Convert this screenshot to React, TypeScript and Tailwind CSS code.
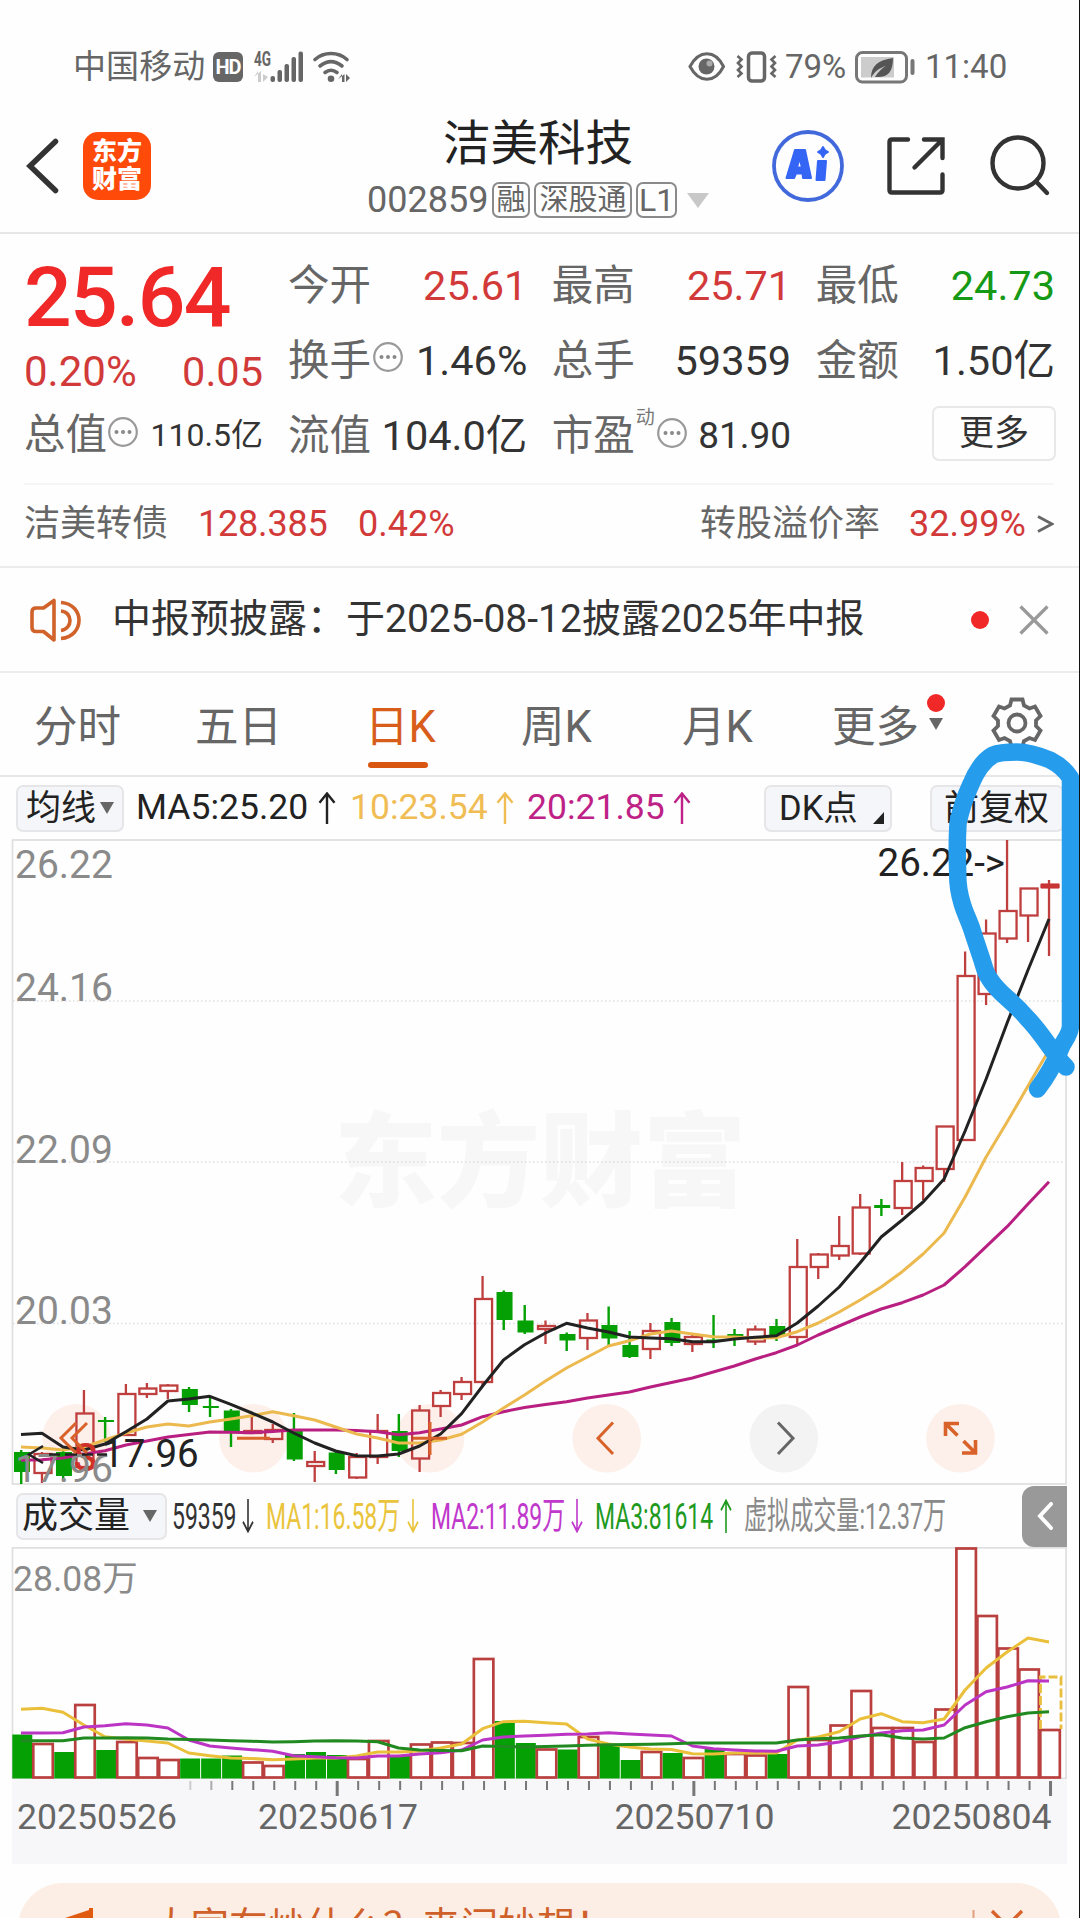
import { FC, ReactNode } from 'react';
import clsx from 'clsx';

// [kind, body top, body bottom, wick top, wick bottom]
type Candle = ['r' | 'g', number, number, number, number];
type Bar = ['r' | 'g', number];

const STEP = 20.98;
const cx = (i: number) => 21 + STEP * i;

const candles: Candle[] = [
  ['g', 1452, 1472, 1450, 1484],
  ['r', 1454, 1473, 1452, 1483],
  ['g', 1452, 1476, 1449, 1479],
  ['r', 1413.5, 1467, 1390, 1470],
  ['g', 1420, 1422, 1417, 1442],
  ['r', 1394, 1435, 1384, 1435],
  ['r', 1388.5, 1394, 1383, 1398],
  ['r', 1385.5, 1391, 1384, 1399],
  ['g', 1389, 1405, 1387, 1412],
  ['g', 1406, 1408, 1397, 1417],
  ['g', 1410.5, 1432, 1409, 1447],
  ['r', 1431, 1433, 1416, 1433],
  ['r', 1430, 1439, 1424, 1443],
  ['g', 1431, 1459.5, 1413, 1461],
  ['r', 1462, 1466, 1451, 1482],
  ['g', 1452.5, 1470, 1452, 1474],
  ['r', 1457, 1477.5, 1453, 1479],
  ['r', 1431, 1457, 1414, 1464],
  ['g', 1431, 1451, 1414, 1457],
  ['r', 1410.5, 1458.5, 1405, 1472],
  ['r', 1393, 1406, 1390, 1417],
  ['r', 1382, 1394, 1377, 1400],
  ['r', 1299, 1382, 1276, 1387],
  ['g', 1292, 1320, 1290.5, 1330],
  ['g', 1320.5, 1332.5, 1305, 1334],
  ['r', 1326, 1329, 1320.5, 1344],
  ['g', 1334, 1340.5, 1332.5, 1351],
  ['r', 1320.5, 1338, 1313, 1350],
  ['g', 1325, 1338.5, 1306.5, 1346],
  ['g', 1345, 1357, 1331, 1358],
  ['r', 1331, 1349, 1323, 1359],
  ['g', 1322, 1343, 1318, 1346],
  ['r', 1337, 1344, 1335, 1352],
  ['g', 1339.5, 1341.5, 1315, 1348],
  ['g', 1334, 1336.5, 1329, 1346],
  ['r', 1329.5, 1341.5, 1325.5, 1345],
  ['g', 1326, 1337, 1319, 1341],
  ['r', 1267, 1337, 1239, 1345],
  ['r', 1254.5, 1267, 1253, 1279],
  ['r', 1246, 1255.5, 1216, 1260],
  ['r', 1207.5, 1253.5, 1194, 1255],
  ['g', 1205, 1208, 1199, 1216],
  ['r', 1181, 1208, 1162, 1215],
  ['r', 1168, 1181, 1165.5, 1200],
  ['r', 1126.5, 1169, 1126, 1182],
  ['r', 976, 1140, 951.5, 1140],
  ['r', 933.5, 994, 919.5, 1005],
  ['r', 911, 938.5, 840, 943],
  ['r', 888.5, 915.5, 888, 942],
  ['r', 885, 887, 880, 956],
];

const ma5 = [
  1434.5, 1433.3, 1447, 1450, 1444, 1431.7, 1419, 1401, 1399, 1396.3, 1404.3, 1413, 1422, 1433, 1443,
  1451, 1455.7, 1456, 1454, 1446, 1434, 1413.7, 1386, 1360, 1344.7, 1333, 1323.3, 1328, 1332, 1337,
  1338, 1338.7, 1341.7, 1341.7, 1339, 1337.3, 1335.7, 1323, 1306, 1287, 1262.7, 1237, 1220, 1202,
  1179, 1131, 1079, 1023, 970, 919,
];
const ma10 = [
  1447, 1448, 1450, 1447, 1440, 1433, 1427, 1424, 1426, 1422, 1419, 1415.7, 1411.7, 1415.7, 1420,
  1427, 1434, 1438, 1443, 1443, 1440, 1434.3, 1422, 1408, 1395, 1381, 1368, 1357, 1346, 1340.7,
  1334, 1331, 1334, 1336.7, 1337, 1338, 1337.7, 1331.7, 1323, 1312, 1300, 1287, 1271.7, 1254, 1233,
  1197, 1157, 1122, 1086, 1050,
];
const ma20 = [
  1460.3, 1459.7, 1458, 1454, 1450.7, 1445, 1441, 1437, 1434.5, 1432, 1432.3, 1432.7, 1431.5, 1430,
  1430, 1430, 1430.5, 1431.7, 1434.7, 1432.7, 1429, 1425, 1416.7, 1411.7, 1407.5, 1404.5, 1401.7,
  1398, 1395, 1392, 1387, 1382.5, 1378, 1372, 1366, 1359, 1352.7, 1345, 1335, 1326, 1317, 1309,
  1302.7, 1295, 1285, 1266.7, 1246.7, 1226.7, 1204, 1181.7,
];

const bars: Bar[] = [
  ['g', 1734.5], ['r', 1744], ['g', 1752], ['r', 1705], ['g', 1750],
  ['r', 1742], ['r', 1758], ['r', 1760], ['g', 1758.5], ['g', 1758.5],
  ['g', 1755.5], ['r', 1762.5], ['r', 1766], ['g', 1754], ['g', 1752],
  ['g', 1755], ['r', 1759], ['r', 1741], ['g', 1755], ['r', 1744.5],
  ['r', 1742.5], ['r', 1743], ['r', 1659], ['g', 1721], ['g', 1743],
  ['r', 1749.5], ['g', 1749.5], ['r', 1737], ['g', 1745], ['g', 1760],
  ['r', 1752], ['g', 1753], ['r', 1758], ['g', 1749], ['r', 1754],
  ['r', 1755.5], ['g', 1754], ['r', 1687], ['r', 1740], ['r', 1725.5],
  ['r', 1691], ['r', 1728], ['r', 1728], ['r', 1742], ['r', 1709.5],
  ['r', 1548.5], ['r', 1616], ['r', 1648.5], ['r', 1669.5], ['r', 1730],
];

const vol5 = [
  1709.3, 1708.3, 1712.3, 1725, 1736.7, 1739, 1741, 1743, 1753, 1755.7, 1758, 1758.5, 1759.7, 1759,
  1758, 1758, 1756, 1752, 1752, 1751, 1748, 1744, 1728.7, 1721.7, 1721.3, 1722.7, 1724, 1739, 1744,
  1747, 1749, 1749.5, 1753.7, 1754, 1753, 1753, 1753, 1740, 1737, 1731.7, 1719, 1713.7, 1721.7,
  1722.7, 1719, 1690, 1668, 1652, 1638, 1642,
];
const vol10 = [
  1733, 1733, 1732.7, 1727, 1725.7, 1723.7, 1725, 1728, 1740, 1746, 1748, 1749.7, 1751.3, 1755.7,
  1756.7, 1757.7, 1758, 1756, 1756, 1754, 1752.7, 1750, 1740, 1737, 1736, 1735.3, 1734.3, 1734,
  1732.7, 1734, 1735, 1736, 1746, 1748.7, 1750, 1751, 1751.3, 1746, 1745, 1742, 1736.7, 1733,
  1730.7, 1730, 1725, 1705, 1691.7, 1687, 1680.7, 1681,
];
const vol20 = [
  1740.7, 1740.7, 1740.7, 1738, 1738, 1737.7, 1738, 1739, 1739.5, 1740, 1740.7, 1741.3, 1742, 1741.7,
  1741, 1740.7, 1741, 1741.7, 1748, 1750, 1750.5, 1750.7, 1746, 1746.5, 1747, 1746.5, 1746, 1745.3,
  1744.7, 1744.5, 1744.3, 1743.7, 1743, 1743, 1743, 1743, 1743, 1740, 1738.7, 1738, 1736, 1734.7,
  1738, 1739, 1738, 1727.7, 1721.7, 1716.7, 1713, 1711.7,
];

const toPoints = (values: number[]) => values.map((y, i) => `${cx(i).toFixed(1)},${y}`).join(' ');

const MoreDots: FC<{ className?: string }> = ({ className }) => (
  <svg viewBox="0 0 30 30" className={clsx('w-[30px] h-[30px] shrink-0', className)}>
    <circle cx="15" cy="15" r="13.8" fill="none" stroke="#999" strokeWidth="2.2" />
    <circle cx="8.5" cy="15" r="2" fill="#888" />
    <circle cx="15" cy="15" r="2" fill="#888" />
    <circle cx="21.5" cy="15" r="2" fill="#888" />
  </svg>
);

const Arrow: FC<{ down?: boolean; className?: string }> = ({ down, className }) => (
  <svg viewBox="0 0 18 33" preserveAspectRatio="none" className={clsx('shrink-0', className)}>
    <path
      d={down ? 'M9 0V31M1.5 22L9 31.5L16.5 22' : 'M9 33V2M1.5 11L9 1.5L16.5 11'}
      fill="none"
      stroke="currentColor"
      strokeWidth="2.4"
    />
  </svg>
);

const StatusBar = () => (
  <div className="flex items-center h-[100px] pt-[33px] pl-[73px] text-[33px] leading-[33px] text-[#666]">
    <span className="w-[140px] tracking-[0.1px]">中国移动</span>
    <span className="flex items-center justify-center w-[30px] h-[30px] rounded-[6px] bg-[#666] text-white text-[20px] leading-none font-bold tracking-[-1px]">
      HD
    </span>
    <svg viewBox="252 47 100 36" className="w-[100px] h-[36px] ml-[9px]">
      <text x="254" y="63.500" fontSize="19.500" fontWeight="700" textLength="17" lengthAdjust="spacingAndGlyphs" fill="#666">
        4G
      </text>
      <g fill="#ccc">
        <path d="M258 69V80H261V69L254 75ZM263 69V80L268 75L263 72Z" />
      </g>
      <g fill="#666">
        <rect x="270.5" y="74" width="4.5" height="6" rx="2" />
        <rect x="277.5" y="68" width="4.5" height="12" rx="2" />
        <rect x="284.5" y="62" width="4.5" height="18" rx="2" />
        <rect x="291.5" y="55" width="4.5" height="25" rx="2" />
        <rect x="298.5" y="49.5" width="4.5" height="30.5" rx="2" />
        <circle cx="331" cy="76.8" r="3.3" />
        <path d="M342 72V80H344.500V72L338 77.500ZM346 72V80L350 76Z" />
      </g>
      <g fill="none" stroke="#666" strokeWidth="3.6" strokeLinecap="round">
        <path d="M315 57.500C324 49.500 338 49.500 347 57.500" />
        <path d="M320 64C327 58.500 335 58.500 342 64" />
        <path d="M325 70.500C329 67.500 333 67.500 337 70.500" />
      </g>
    </svg>
    <div className="flex-1" />
    <svg viewBox="688 49 90 32" className="w-[90px] h-[32px] mr-[7px]">
      <g fill="none" stroke="#666" strokeWidth="3">
        <path d="M690 64.500C699 47.500 715 47.500 723.500 64.500C715 81.500 699 81.500 690 64.500Z" />
        <rect x="748.500" y="51" width="16" height="28" rx="3.500" strokeWidth="3.500" />
        <path d="M737.500 54L741.500 57.500L738 61L741.500 64.500L738 68L741.500 71.500L737.500 75" strokeWidth="2.600" />
        <path d="M775.500 54L771.500 57.500L775 61L771.500 64.500L775 68L771.500 71.500L775.500 75" strokeWidth="2.600" />
      </g>
      <circle cx="706.500" cy="64.500" r="8" fill="#666" />
      <circle cx="709.500" cy="61.500" r="3" fill="#aaa" />
    </svg>
    <span className="w-[69px]">79%</span>
    <svg viewBox="853 48 62 34" className="w-[62px] h-[34px]">
      <rect x="855.500" y="50.500" width="50" height="29.500" rx="6" fill="none" stroke="#777" strokeWidth="3" />
      <rect x="860" y="55" width="33" height="20.500" fill="#ccc" />
      <path d="M870 76C870 64 877 58 892 56C892 70 887 76 874 75C877 70 881 66 885 64C878 66 873 70 870 76Z" fill="#555" />
      <rect x="909.500" y="57" width="4" height="16" rx="2" fill="#777" />
    </svg>
    <span className="w-[83px] ml-[9px] mr-[71px]">11:40</span>
  </div>
);

const Tag: FC<{ children: ReactNode; className?: string }> = ({ children, className }) => (
  <span
    className={clsx(
      'flex items-center justify-center h-[36px] border-2 border-[#8a8a8a] rounded-[7px] text-[29px] leading-none',
      className,
    )}
  >
    {children}
  </span>
);

const Header = () => (
  <header className="flex h-[134px] border-b-2 border-[#e6e6e6]">
    <svg viewBox="26 137 34 58" className="w-[34px] h-[58px] ml-[26px] mt-[37px]">
      <path d="M55.500 141.500L30 166L55.500 190.500" fill="none" stroke="#333" strokeWidth="5.500" strokeLinecap="round" />
    </svg>
    <div className="flex flex-col items-center justify-center w-[68px] h-[68px] ml-[23px] mt-[32px] rounded-[15px] bg-[#ff4a0a] text-white text-[25px] leading-[28px] font-black">
      <span>东方</span>
      <span>财富</span>
    </div>
    <div className="flex flex-col items-center w-[344px] ml-[215px] pt-[16px]">
      <h1 className="text-[47.500px] leading-[56px] text-[#222]">洁美科技</h1>
      <div className="flex items-center h-[40px] mt-[8px] gap-[4px] text-[#666]">
        <span className="w-[121px] text-[36px] leading-none">002859</span>
        <Tag className="w-[38px]">融</Tag>
        <Tag className="w-[98px]">深股通</Tag>
        <Tag className="w-[41px] text-[32px]">L1</Tag>
        <svg viewBox="0 0 22 15" className="w-[22px] h-[15px] ml-[6px]">
          <path d="M0 0H22L11 15Z" fill="#c8c8c8" />
        </svg>
      </div>
    </div>
    <svg viewBox="770 128 282 76" className="w-[282px] h-[76px] ml-[60px] mt-[28px]">
      <circle cx="808" cy="166" r="34" fill="none" stroke="#4169dc" strokeWidth="3.800" />
      <g fill="#3565f5" stroke="#3565f5" strokeWidth="2" strokeLinejoin="round">
        <path fillRule="evenodd" d="M795 150H805L811 178H803L802.500 173.500H796L794 178H786.500ZM799.500 158L797 167.500H802Z" />
        <path d="M818 161H826L824.500 180H816.500Z" />
        <path d="M823 147L824.800 150.200L828 152L824.800 153.800L823 157L821.200 153.800L818 152L821.200 150.200Z" />
      </g>
      <g fill="none" stroke="#333" strokeWidth="4.400" strokeLinecap="round">
        <path d="M908 139.500H892Q889.500 139.500 889.500 142V190Q889.500 192.500 892 192.500H940Q942.500 192.500 942.500 190V174.500" />
        <path d="M924 139.500H942.500V158M942 140L914.500 167.500" />
        <circle cx="1018" cy="163" r="25.500" />
        <path d="M1036.500 182L1047 193" />
      </g>
    </svg>
  </header>
);

const UP = 'text-[#d23a3a]';

interface IField {
  label: string;
  value: string;
  valueClassName?: string;
  info?: boolean;
}

const fields: IField[] = [
  { label: '今开', value: '25.61', valueClassName: UP },
  { label: '最高', value: '25.71', valueClassName: UP },
  { label: '最低', value: '24.73', valueClassName: 'text-[#169a16]' },
  { label: '换手', value: '1.46%', info: true },
  { label: '总手', value: '59359' },
  { label: '金额', value: '1.50亿' },
  { label: '流值', value: '104.0亿' },
];

const Quote = () => (
  <section className="flex h-[249px] pt-[14px] pl-[24px] text-[41.500px] leading-none">
    <div className="w-[239px]">
      <div className="flex items-center h-[99px] text-[84px] font-medium text-[#f02828] tracking-[-1.7px]">
        25.64
      </div>
      <div className={clsx('flex items-center justify-between h-[50px]', UP)}>
        <span className="text-[42px]">0.20%</span>
        <span>0.05</span>
      </div>
      <div className="flex items-center h-[75px] text-[#333]">
        <span className="text-[#666]">总值</span>
        <MoreDots className="mb-[6px] ml-[1px]" />
        <span className="ml-auto text-[32px]">110.5亿</span>
      </div>
    </div>
    <div className="grid grid-cols-3 auto-rows-[75px] w-[767px] gap-x-[24.500px] ml-[25px] items-center">
      {fields.map(({ label, value, valueClassName, info }) => (
        <div key={label} className="flex items-center">
          <span className="text-[#666]">{label}</span>
          {info && <MoreDots className="mb-[7px] ml-[2px]" />}
          <span className={clsx('ml-auto', valueClassName ?? 'text-[#333]')}>{value}</span>
        </div>
      ))}
      <div className="flex items-center">
        <span className="text-[#666]">市盈</span>
        <span className="text-[19px] text-[#777] mb-[37px] ml-[1px]">动</span>
        <MoreDots className="mb-[6px] ml-[2px]" />
        <span className="ml-auto text-[37px] text-[#333]">81.90</span>
      </div>
      <div className="flex items-center justify-center justify-self-end w-[124px] h-[55px] -mr-[1px] mb-[4px] border-2 border-[#e8e8e8] rounded-[7px] text-[35px] text-[#333]">
        更多
      </div>
    </div>
  </section>
);

const BondRow = () => (
  <section className="flex items-center h-[83px] ml-[24px] mr-[25px] border-t-2 border-[#f5f5f5] text-[36px] leading-none pb-[3px]">
    <span className="w-[174px] text-[#666]">洁美转债</span>
    <span className={clsx('w-[160px] tracking-[-0.2px]', UP)}>128.385</span>
    <span className={UP}>0.42%</span>
    <span className="ml-auto w-[209px] text-[#666]">转股溢价率</span>
    <span className={clsx('w-[128px]', UP)}>32.99%</span>
    <svg viewBox="0 0 17 18" className="w-[17px] h-[18px]">
      <path d="M1 1.500L15 9L1 16.500" fill="none" stroke="#666" strokeWidth="2.800" />
    </svg>
  </section>
);

const Notice = () => (
  <section className="flex items-center h-[107px] border-y-2 border-[#ececec] pl-[29px] text-[39px] leading-none text-[#333]">
    <svg viewBox="28 596 54 46" className="w-[54px] h-[46px]">
      <g fill="none" stroke="#d0622a" strokeWidth="3.600" strokeLinejoin="round">
        <path d="M53 599.500V639L42.500 630.500H35Q31 630.500 31 626.500V611Q31 607 35 607H42.500Z" />
        <path d="M60 610C72 611 72 628 60 629.500" />
        <path d="M60 601.500C84 603 84 635.500 60 637.500" />
      </g>
    </svg>
    <span className="ml-[29px] whitespace-nowrap">中报预披露：于2025-08-12披露2025年中报</span>
    <span className="w-[18px] h-[18px] ml-auto rounded-full bg-[#f02828]" />
    <svg viewBox="0 0 30 30" className="w-[30px] h-[30px] ml-[30px] mr-[30px]">
      <path d="M1.500 1.500L28.500 28.500M28.500 1.500L1.500 28.500" stroke="#999" strokeWidth="3.200" />
    </svg>
  </section>
);

const tabs = [
  { label: '分时', className: 'w-[161px]' },
  { label: '五日', className: 'w-[171px]' },
  { label: '日K', className: 'w-[155px] text-[#d85c1a]', active: true },
  { label: '周K', className: 'w-[161px]' },
  { label: '月K', className: 'w-[150px]' },
  { label: '更多', className: 'w-[95px]' },
];

const Tabs = () => (
  <nav className="flex h-[104px] border-b-2 border-[#e6e6e6] pl-[34px] text-[43.500px] leading-none text-[#666]">
    {tabs.map(({ label, className, active }) => (
      <div key={label} className={clsx('flex flex-col pt-[33px]', className)}>
        <span className={clsx(active && '-ml-[1px]')}>{label}</span>
        {active && <span className="w-[60px] h-[6.500px] mt-[12px] ml-[2px] rounded-full bg-[#d8560f]" />}
      </div>
    ))}
    <div className="flex flex-col items-center w-[18px] pt-[21px]">
      <span className="w-[18px] h-[18px] rounded-full bg-[#f02828]" />
      <svg viewBox="0 0 14 12" className="w-[14px] h-[12px] mt-[6px]">
        <path d="M0 0H14L7 12Z" fill="#666" />
      </svg>
    </div>
    <svg viewBox="-26 -26 52 52" className="w-[52px] h-[52px] ml-[46px] mt-[24px]">
      <g fill="none" stroke="#666" strokeWidth="3.800">
        <path d="M-5.500 -23.500H5.500L7 -17.500L12.500 -14.500L18 -16.500L23.500 -7L19 -2.500V3L23.500 7.500L18 17L12.500 15L7 18L5.500 23.500H-5.500L-7 18L-12.500 15L-18 17L-23.500 7.500L-19 3V-2.500L-23.500 -7L-18 -16.500L-12.500 -14.500L-7 -17.500Z" />
        <circle r="8.500" />
      </g>
    </svg>
  </nav>
);

const Triangle = () => (
  <svg viewBox="0 0 14 12" className="w-[14px] h-[12px]">
    <path d="M0 0H14L7 12Z" fill="#666" />
  </svg>
);

const MovingAverages = () => (
  <div className="flex items-center h-[62px] pl-[16px] text-[35.500px] leading-none whitespace-nowrap">
    <div className="flex items-center gap-[4px] w-[108px] h-[47px] pl-[8px] bg-[#f5f6f9] border-2 border-[#e6e6e8] rounded-[7px] text-[35px] text-[#222]">
      <span className="w-[70px]">均线</span>
      <Triangle />
    </div>
    <span className="w-[181px] ml-[12px] text-[#222]">MA5:25.20</span>
    <Arrow className="w-[18px] h-[32px] ml-[1px] text-[#222]" />
    <span className="w-[146px] ml-[14px] text-[#f0bd55]">10:23.54</span>
    <Arrow className="w-[18px] h-[32px] text-[#f0bd55]" />
    <span className="w-[146px] ml-[13px] text-[#be2286]">20:21.85</span>
    <Arrow className="w-[18px] h-[32px] text-[#be2286]" />
    <div className="flex items-center w-[128px] h-[47px] ml-[73px] pl-[13px] bg-[#f5f6f9] border-2 border-[#e6e6e8] rounded-[7px] text-[#222]">
      <span className="w-[90px] text-[34.500px]">DK点</span>
      <svg viewBox="0 0 11 12" className="w-[11px] h-[12px] ml-[4px] mt-[20px]">
        <path d="M11 0V12H0Z" fill="#222" />
      </svg>
    </div>
    <div className="flex items-center w-[134px] h-[47px] ml-[38px] pl-[12px] bg-[#f5f6f9] border-2 border-[#e6e6e8] rounded-[7px] text-[35px] text-[#222]">
      前复权
    </div>
  </div>
);

const CandleShape: FC<{ candle: Candle; x: number }> = ({ candle, x }) => {
  const [kind, top, bottom, high, low] = candle;
  if (kind === 'g') {
    return (
      <g fill="#04a004">
        <rect x={x - 7} y={top} width="16" height={bottom - top} />
        <rect x={x - 1} y={high} width="2.400" height={low - high} />
      </g>
    );
  }
  return (
    <g fill="none" stroke="#bf3e3e" strokeWidth="2.300">
      <path d={`M${x} ${high}V${top}M${x} ${bottom}V${low}`} />
      <rect x={x - 7.5} y={top} width="17" height={bottom - top} />
    </g>
  );
};

const CandleChart = () => (
  <svg viewBox="0 839 1080 646" className="block w-[1080px] h-[646px]">
    <text
      x="334"
      y="1199"
      fontSize="103"
      fontWeight="900"
      fill="#f7f7f7"
      className="font-['Noto_Sans_CJK_SC',sans-serif]"
    >
      东方财富
    </text>
    {[1001, 1162, 1323.5].map((y) => (
      <path key={y} d={`M13 ${y}H1066`} stroke="#ddd" strokeWidth="1.500" strokeDasharray="1.500 2.500" />
    ))}
    <rect x="12.500" y="840" width="1053.500" height="644" fill="none" stroke="#e0e0e0" strokeWidth="1.800" />
    {[76.5, 253.4, 430, 606.8, 783.8, 960.5].map((x) => (
      <circle key={x} cx={x} cy="1438.300" r="34.300" fill={x === 783.8 ? '#f3f3f3' : '#fdf0ea'} />
    ))}
    {candles.map((candle, i) => (
      <CandleShape key={i} candle={candle} x={cx(i)} />
    ))}
    <path d="M1041 886H1059" stroke="#c83434" strokeWidth="5" />
    <g fill="none" strokeWidth="3" strokeLinejoin="round">
      <polyline points={toPoints(ma20)} stroke="#b81f80" />
      <polyline points={toPoints(ma10)} stroke="#ecb94e" />
      <polyline points={toPoints(ma5)} stroke="#222" />
    </g>
    <text x="73.500" y="1471" fontSize="39" fontWeight="500" fill="#cf3028">S</text>
    <g fontSize="39" fill="#8a8a8a">
      <text x="15" y="878">26.22</text>
      <text x="15" y="1001">24.16</text>
      <text x="15" y="1162.500">22.09</text>
      <text x="15" y="1324">20.03</text>
      <text x="15" y="1481.500">17.96</text>
    </g>
    <path d="M43 1446L29 1454.500L43 1463M49 1454.500H60M65 1454.500H77M82 1454.500H93M97 1454.500H107" fill="none" stroke="#222" strokeWidth="2.600" />
    <g fontSize="38.500" fill="#222">
      <text x="102" y="1467">17.96</text>
      <text x="877.500" y="875.500">26.22-&gt;</text>
    </g>
    <g fill="none" stroke="#d8622a" strokeWidth="3">
      <path d="M76 1423L61 1438L76 1453M87 1423L72 1438L87 1453" />
      <path d="M237 1438.300H270M413 1438.300H447M430 1422V1455" />
      <path d="M613 1422.500L598 1438.300L613 1454" />
      <path d="M945.500 1436V1423.500H959M946 1424L957.500 1435.500" strokeWidth="3.600" />
      <path d="M975.500 1440V1453H962M975 1452.500L963.500 1441" strokeWidth="3.600" />
    </g>
    <path d="M778 1422.500L793 1438.300L778 1454" fill="none" stroke="#666" strokeWidth="3" />
  </svg>
);

const volumeStats = [
  { text: '59359', width: 'w-[69.500px]', color: 'text-[#333]', down: true },
  { text: 'MA1:16.58万', width: 'w-[141px]', color: 'text-[#eac43c]', down: true },
  { text: 'MA2:11.89万', width: 'w-[140px]', color: 'text-[#c038cc]', down: true },
  { text: 'MA3:81614', width: 'w-[125px]', color: 'text-[#1f9a1f]' },
];

const VolumeHeader = () => (
  <div className="flex items-center h-[62px] pl-[16px] text-[37px] leading-none whitespace-nowrap">
    <div className="flex items-center w-[151px] h-[47px] pl-[4px] bg-[#f5f6f9] border-2 border-[#e6e6e8] rounded-[7px] text-[36px] text-[#222]">
      <span className="w-[121px]">成交量</span>
      <Triangle />
    </div>
    <div className="flex items-center gap-[12px] ml-[5px]">
      {volumeStats.map(({ text, width, color, down }) => (
        <div key={text} className={clsx('flex items-center', color)}>
          <span className={width}>
            <span className="inline-block origin-left scale-x-[0.62]">{text}</span>
          </span>
          <Arrow down={down} className="w-[12px] h-[34px]" />
        </div>
      ))}
      <span className="w-[200px] text-[#8a8a8a]">
        <span className="inline-block origin-left scale-x-[0.624]">虚拟成交量:12.37万</span>
      </span>
    </div>
    <div className="flex items-center justify-center w-[45px] h-[61px] ml-auto mr-[12px] shrink-0 rounded-l-[12px] bg-[#999]">
      <svg viewBox="0 0 16 28" className="w-[16px] h-[28px]">
        <path d="M14 2L3 14L14 26" fill="none" stroke="#fff" strokeWidth="4" strokeLinecap="round" />
      </svg>
    </div>
  </div>
);

const VolumeChart = () => (
  <svg viewBox="0 1547 1080 232" className="block w-[1080px] h-[232px]">
    <rect x="12.500" y="1547.800" width="1053.500" height="230.700" fill="none" stroke="#e0e0e0" strokeWidth="1.800" />
    {bars.map(([kind, top], i) => {
      const x = cx(i) - 8.7;
      return kind === 'g' ? (
        <rect key={i} x={x} y={top} width="20" height={1778.5 - top} fill="#04a004" />
      ) : (
        <rect key={i} x={x} y={top} width="19.500" height={1777.5 - top} fill="#fff" stroke="#ba4040" strokeWidth="2.700" />
      );
    })}
    <path d="M1040.500 1729V1677H1061V1729" fill="none" stroke="#e8bf3c" strokeWidth="2.800" strokeDasharray="9 3" />
    <text x="13" y="1591" fontSize="35.500" fill="#8a8a8a">28.08万</text>
    <g fill="none" strokeWidth="3" strokeLinejoin="round">
      <polyline points={toPoints(vol5)} stroke="#eabf3a" />
      <polyline points={toPoints(vol10)} stroke="#bb34c4" />
      <polyline points={toPoints(vol20)} stroke="#208a20" />
    </g>
  </svg>
);

const LONG_TICKS = [15, 32, 49];
const ticks = Array.from({ length: 42 }, (_, i) => i + 8);

const DateAxis = () => (
  <div className="w-[1055px] h-[85px] ml-[12px] bg-[#f7f7f9]">
    <svg viewBox="12 1779 1055 85" className="block w-[1055px] h-[85px]">
      {ticks.map((i) => {
        const long = LONG_TICKS.includes(i);
        return (
          <rect
            key={i}
            x={cx(i) + (long ? 0 : 0.5)}
            y="1781"
            width={long ? 3 : 2}
            height={long ? 15 : 9}
            fill={i === 8 ? '#ccc' : i === 9 ? '#aaa' : '#777'}
          />
        );
      })}
      <g fontSize="35.600" fill="#666">
        <text x="17" y="1829">20250526</text>
        <text x="258" y="1829">20250617</text>
        <text x="614.500" y="1829">20250710</text>
        <text x="891.500" y="1829">20250804</text>
      </g>
    </svg>
  </div>
);

const Banner = () => (
  <div className="flex h-[90px] w-[1043px] ml-[18px] mt-[18.500px] rounded-[46px] bg-[#fceee5] text-[38.500px] leading-none text-[#d0602a]">
    <svg viewBox="60 1905 40 30" className="w-[40px] h-[30px] ml-[42px] mt-[22px]">
      <path d="M62 1919L89 1910V1908H93V1935H89L62 1930Z" fill="#e05a10" />
    </svg>
    <span className="w-[818px] ml-[52px] mt-[25px]">大家在炒什么？来问妙想！</span>
    <svg viewBox="970 1905 60 40" className="w-[60px] h-[40px] mt-[22px] shrink-0">
      <path d="M973.500 1910V1945" stroke="#e0a080" strokeWidth="2" />
      <path d="M992 1911L1024 1943M1022 1911L990 1943" stroke="#d8622a" strokeWidth="3.400" />
    </svg>
  </div>
);

// Hand-drawn loop round the latest candles
const Scribble = () => (
  <svg viewBox="0 0 1080 1918" className="absolute inset-0 w-[1080px] h-[1918px] pointer-events-none">
    <path
      d="M1037.500 1089C1046 1078 1054 1064 1060 1050C1063 1041 1070 1036 1070.500 1026V778C1066 771 1058 764 1050 760C1040 756 1028 752 1017 752C1008 752 1000 752 993 755C984 760 976 772 971 784C964 799 961 809 958 823C957 840 957 855 957.700 873C957.500 884 959 893 962 903C965 914 970 922 973 933C976 942 979 951 982 960C984 966 985 972 989 978C994 986 1000 992 1007 998C1014 1004 1021 1011 1027 1018C1036 1027 1043 1037 1050 1047C1055 1054 1060 1061 1066 1067"
      fill="none"
      stroke="#269cec"
      strokeWidth="17.500"
      strokeLinecap="round"
      strokeLinejoin="round"
    />
  </svg>
);

const App: FC = () => (
  <main className="relative w-[1080px] h-[1918px] overflow-hidden bg-[#fefefe] border-r border-[#111] font-['Roboto','Noto_Sans_CJK_SC',sans-serif]">
    <StatusBar />
    <Header />
    <Quote />
    <BondRow />
    <Notice />
    <Tabs />
    <MovingAverages />
    <CandleChart />
    <VolumeHeader />
    <VolumeChart />
    <DateAxis />
    <Banner />
    <Scribble />
  </main>
);

export default App;
